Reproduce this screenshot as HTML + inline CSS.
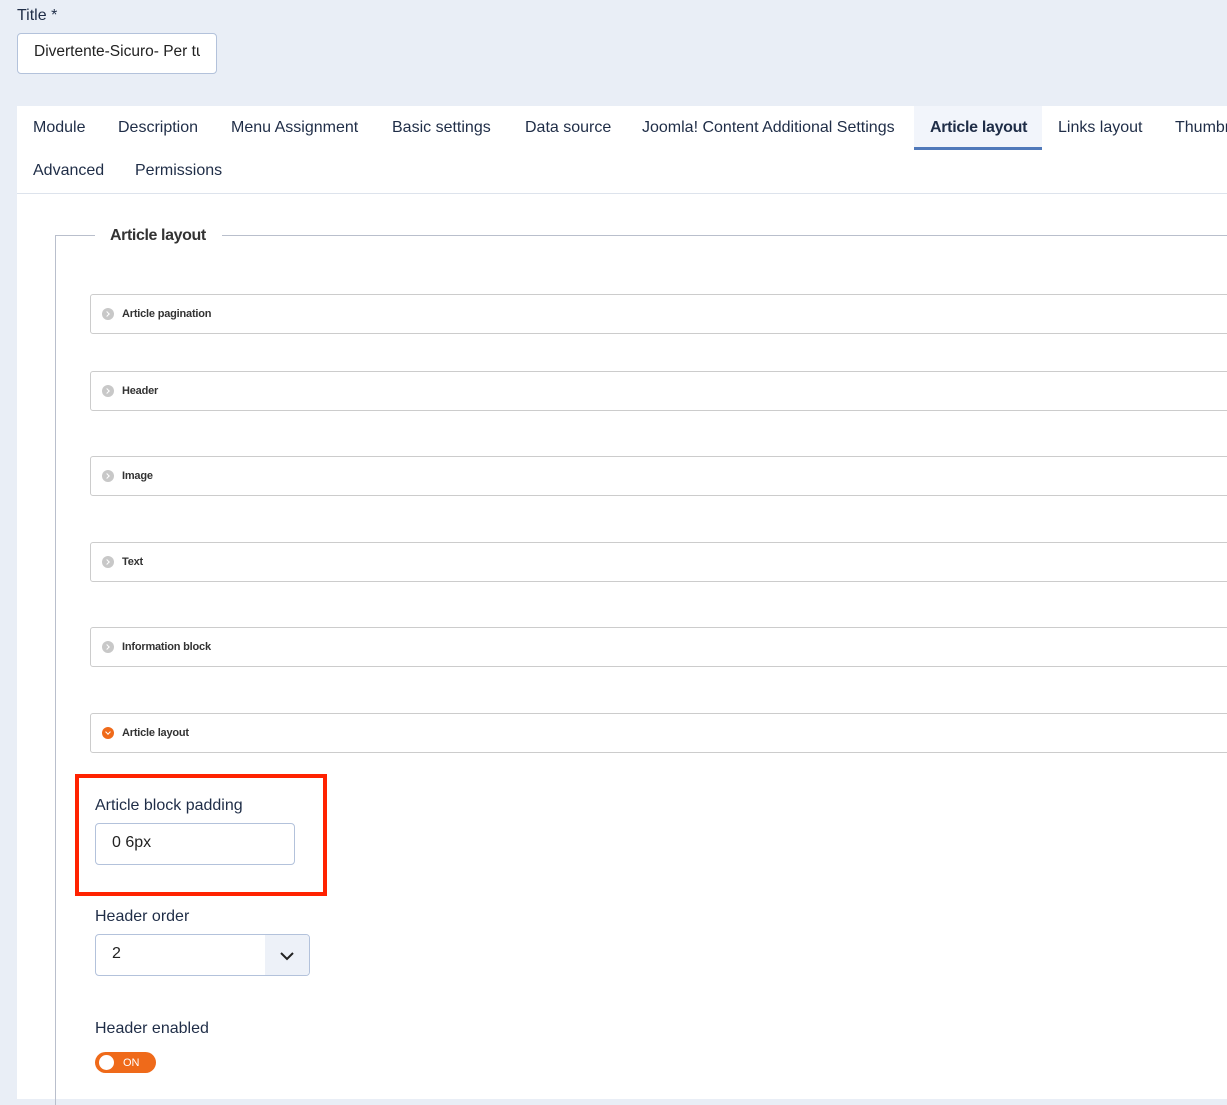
<!DOCTYPE html>
<html><head><style>
body{margin:0;width:1227px;height:1099px;overflow:hidden;background:#e9eef6;font-family:"Liberation Sans",sans-serif;color:#1f2d47;position:relative}
.abs{position:absolute}
.tab{position:absolute;font-size:16px;color:#1f2d47;white-space:nowrap}
.acc{position:absolute;left:90px;width:1150px;height:38px;border:1px solid #ccc;border-radius:3px;background:#fff}
.acc span{position:absolute;left:31px;top:13px;font-size:11px;font-weight:bold;color:#333;letter-spacing:-0.2px}
.acc i{position:absolute;left:11px;top:13px;width:12px;height:12px;border-radius:50%;background:#c8c8c8}
.acc i.g:after{content:"";position:absolute;left:3px;top:4px;width:3px;height:3px;border-right:1.5px solid #fff;border-top:1.5px solid #fff;transform:rotate(45deg)}
.lbl{position:absolute;font-size:16px;color:#1f2d47}
.inp{position:absolute;background:#fff;border:1px solid #b3c2db;border-radius:4px;box-sizing:border-box;font-size:16px;color:#222}
</style></head><body>
<div class="lbl" style="left:17px;top:7px">Title *</div>
<div class="inp" style="left:17px;top:33px;width:200px;height:41px;overflow:hidden;padding:9px 0 0 16px;white-space:nowrap;font-size:15.5px">Divertente-Sicuro- Per t<span style="display:inline-block;width:4px;overflow:hidden;vertical-align:top">u</span></div>
<div class="abs" style="left:17px;top:106px;width:1210px;height:993px;background:#fff"></div>
<div class="abs" style="left:914px;top:106px;width:128px;height:41px;background:#f2f5fb;border-bottom:3px solid #5079ba"></div>
<div class="tab" style="left:33px;top:119px">Module</div>
<div class="tab" style="left:118px;top:119px">Description</div>
<div class="tab" style="left:231px;top:119px">Menu Assignment</div>
<div class="tab" style="left:392px;top:119px">Basic settings</div>
<div class="tab" style="left:525px;top:119px">Data source</div>
<div class="tab" style="left:642px;top:119px">Joomla! Content Additional Settings</div>
<div class="tab" style="left:930px;top:119px;font-weight:bold;letter-spacing:-0.3px">Article layout</div>
<div class="tab" style="left:1058px;top:119px">Links layout</div>
<div class="tab" style="left:1175px;top:119px">Thumbn</div>
<div class="tab" style="left:33px;top:162px">Advanced</div>
<div class="tab" style="left:135px;top:162px">Permissions</div>
<div class="abs" style="left:17px;top:193px;width:1210px;height:1px;background:#dde3ec"></div>
<div class="abs" style="left:55px;top:235px;width:40px;height:1px;background:#b9bfcc"></div>
<div class="abs" style="left:222px;top:235px;width:1010px;height:1px;background:#b9bfcc"></div>
<div class="abs" style="left:55px;top:235px;width:1px;height:870px;background:#b9bfcc"></div>
<div class="abs" style="left:110px;top:227px;font-size:16px;font-weight:bold;color:#333;letter-spacing:-0.4px">Article layout</div>
<div class="acc" style="top:294px"><i class="g"></i><span>Article pagination</span></div>
<div class="acc" style="top:371px"><i class="g"></i><span>Header</span></div>
<div class="acc" style="top:456px"><i class="g"></i><span>Image</span></div>
<div class="acc" style="top:542px"><i class="g"></i><span>Text</span></div>
<div class="acc" style="top:627px"><i class="g"></i><span>Information block</span></div>
<div class="acc" style="top:713px"><i style="background:#ef6a1a"><b style="position:absolute;left:3.5px;top:2.5px;width:3px;height:3px;border-right:1.5px solid #fff;border-bottom:1.5px solid #fff;transform:rotate(45deg)"></b></i><span>Article layout</span></div>
<div class="abs" style="left:75px;top:774px;width:244px;height:114px;border:4px solid #ff2200"></div>
<div class="lbl" style="left:95px;top:797px">Article block padding</div>
<div class="inp" style="left:95px;top:823px;width:200px;height:42px;padding:10px 0 0 16px">0 6px</div>
<div class="lbl" style="left:95px;top:908px">Header order</div>
<div class="inp" style="left:95px;top:934px;width:215px;height:42px;padding:10px 0 0 16px;overflow:hidden">2
<div class="abs" style="left:169px;top:0;width:46px;height:42px;background:#edf1f8"><svg width="46" height="42"><path d="M16 18l6 6 6-6" fill="none" stroke="#222" stroke-width="2"/></svg></div></div>
<div class="lbl" style="left:95px;top:1020px">Header enabled</div>
<div class="abs" style="left:95px;top:1052px;width:61px;height:21px;border-radius:11px;background:#ef6a1a"></div>
<div class="abs" style="left:99px;top:1055px;width:15px;height:15px;border-radius:50%;background:#fff"></div>
<div class="abs" style="left:123px;top:1057px;font-size:11px;color:#fff">ON</div>
</body></html>
